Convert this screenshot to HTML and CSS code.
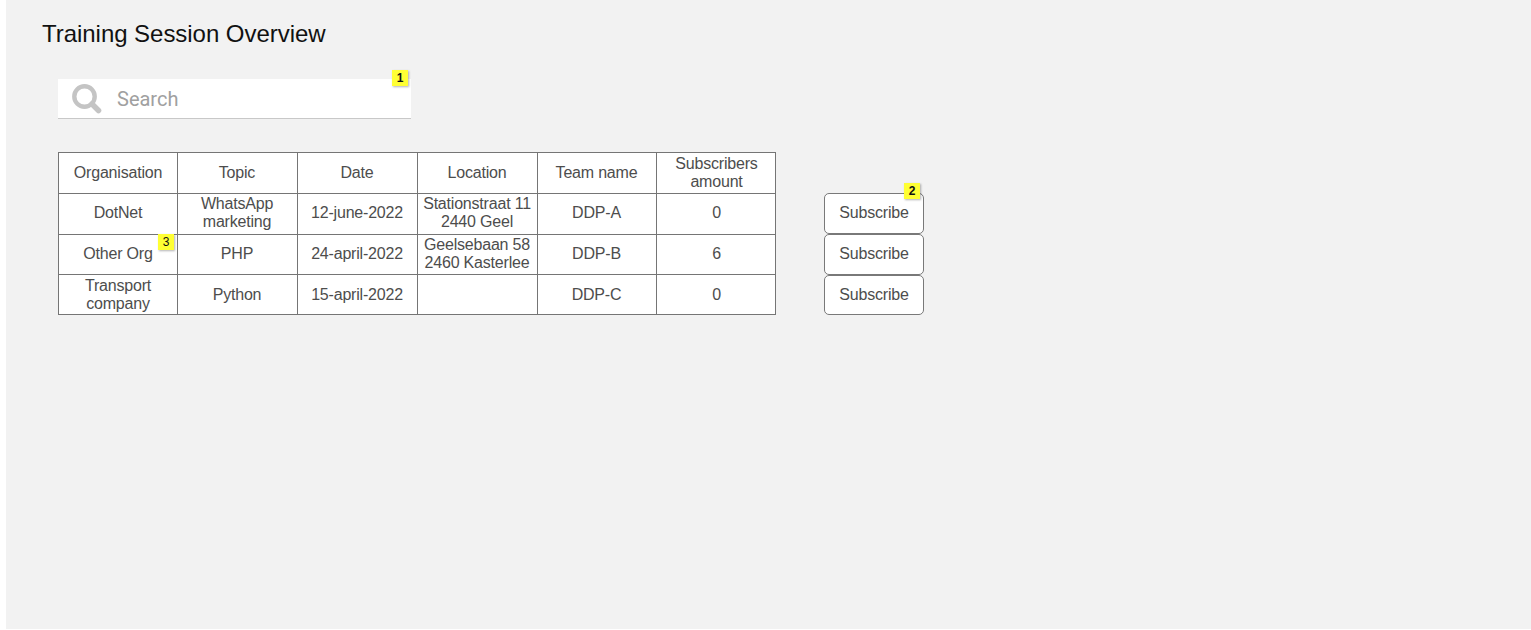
FILE: index.html
```html
<!DOCTYPE html>
<html lang="en">
<head>
    <meta charset="UTF-8">
    <meta name="viewport" content="width=device-width, initial-scale=1.0">
    <title>Training Session Overview</title>
    <link rel="stylesheet" href="styles.css">
</head>
<body>
    <div class="page">
        <h1>Training Session Overview</h1>
        <div class="search-box">
            <svg class="search-icon" width="30" height="30" viewBox="0 0 30 30">
                <circle cx="12.5" cy="12.5" r="10.2" fill="none" stroke="#c4c4c4" stroke-width="4.4"/>
                <path d="M20 20 L26.5 26.5" stroke="#c4c4c4" stroke-width="5.5" stroke-linecap="round"/>
            </svg>
            <span class="search-text">Search</span>
            <span class="note note-search">1</span>
        </div>
        <div class="overview">
            <table class="sessions">
                <colgroup>
                    <col class="col-narrow">
                    <col class="col-wide">
                    <col class="col-wide">
                    <col class="col-wide">
                    <col class="col-narrow">
                    <col class="col-narrow">
                </colgroup>
                <tr class="row-head">
                    <th>Organisation</th>
                    <th>Topic</th>
                    <th>Date</th>
                    <th>Location</th>
                    <th>Team name</th>
                    <th>Subscribers amount</th>
                </tr>
                <tr class="row-one">
                    <td>DotNet</td>
                    <td>WhatsApp marketing</td>
                    <td>12-june-2022</td>
                    <td>Stationstraat 11<br>2440 Geel</td>
                    <td>DDP-A</td>
                    <td>0</td>
                </tr>
                <tr class="row-two">
                    <td class="org-cell">Other Org<span class="note note-org">3</span></td>
                    <td>PHP</td>
                    <td>24-april-2022</td>
                    <td>Geelsebaan 58<br>2460 Kasterlee</td>
                    <td>DDP-B</td>
                    <td>6</td>
                </tr>
                <tr class="row-three">
                    <td>Transport company</td>
                    <td>Python</td>
                    <td>15-april-2022</td>
                    <td></td>
                    <td>DDP-C</td>
                    <td>0</td>
                </tr>
            </table>
            <div class="actions">
                <button class="btn btn-one" type="button">Subscribe<span class="note note-btn">2</span></button>
                <button class="btn btn-two" type="button">Subscribe</button>
                <button class="btn btn-three" type="button">Subscribe</button>
            </div>
        </div>
    </div>
</body>
</html>
```

FILE: styles.css
```css
html, body {
    margin: 0;
    height: 100%;
    background: #fff;
    overflow: hidden;
}
body {
    font-family: "Liberation Sans", Arial, sans-serif;
}
.page {
    margin-left: 6px;
    height: 629px;
    background: #f2f2f2;
    padding: 20px 0 0 36px;
    box-sizing: border-box;
}
h1 {
    margin: 0;
    font-size: 24px;
    line-height: 28px;
    font-weight: 400;
    letter-spacing: -0.04px;
    color: #111;
}
.search-box {
    position: relative;
    display: flex;
    align-items: center;
    width: 353px;
    height: 40px;
    margin: 31px 0 0 16px;
    background: #fff;
    border-bottom: 1px solid #c8c8c8;
    box-sizing: border-box;
    padding-left: 14px;
}
.search-icon {
    flex: none;
}
.search-text {
    margin-left: 15px;
    font-family: Roboto, sans-serif;
    font-size: 20px;
    color: #a0a0a0;
}
.overview {
    display: flex;
    align-items: flex-start;
    margin: 33px 0 0 16px;
}
.sessions {
    border-collapse: collapse;
    table-layout: fixed;
    width: 718px;
    background: #fff;
    font-size: 16px;
    letter-spacing: -0.2px;
    line-height: 18px;
    color: #4d4d4d;
    text-align: center;
}
.col-narrow { width: 119px; }
.col-wide { width: 120px; }
.sessions th, .sessions td {
    border: 1px solid #757575;
    padding: 0 3px 0 2px;
    font-weight: 400;
}
.sessions th:first-child, .sessions td:first-child {
    padding-left: 3px;
}
.sessions th:last-child, .sessions td:last-child {
    padding-left: 3px;
    padding-right: 2px;
}
.row-head { height: 41px; }
.row-one { height: 41px; }
.row-two { height: 40px; }
.row-three { height: 40px; }
.row-head th:not(:last-child) {
    padding-bottom: 1px;
}
.row-one td, .row-two td {
    padding-bottom: 2px;
}
.org-cell {
    position: relative;
}
.actions {
    display: flex;
    flex-direction: column;
    margin: 41px 0 0 48px;
}
.btn {
    position: relative;
    width: 100px;
    height: 41px;
    padding: 0 0 2px;
    background: #fff;
    border: 1px solid #797979;
    border-radius: 5px;
    font-family: inherit;
    font-size: 16px;
    letter-spacing: -0.2px;
    color: #4d4d4d;
}
.btn-three {
    height: 40px;
    padding-bottom: 0;
}
.note {
    position: absolute;
    width: 16px;
    height: 16px;
    background: #ffff33;
    box-shadow: 1px 1px 2px rgba(0, 0, 0, 0.3);
    font-size: 12px;
    font-weight: 700;
    letter-spacing: 0;
    line-height: 16px;
    text-align: center;
    color: #111;
}
.note-search {
    top: -9px;
    right: 3px;
}
.note-org {
    top: -1px;
    right: 3px;
    font-weight: 400;
}
.note-btn {
    top: -11px;
    right: 3px;
}
```
